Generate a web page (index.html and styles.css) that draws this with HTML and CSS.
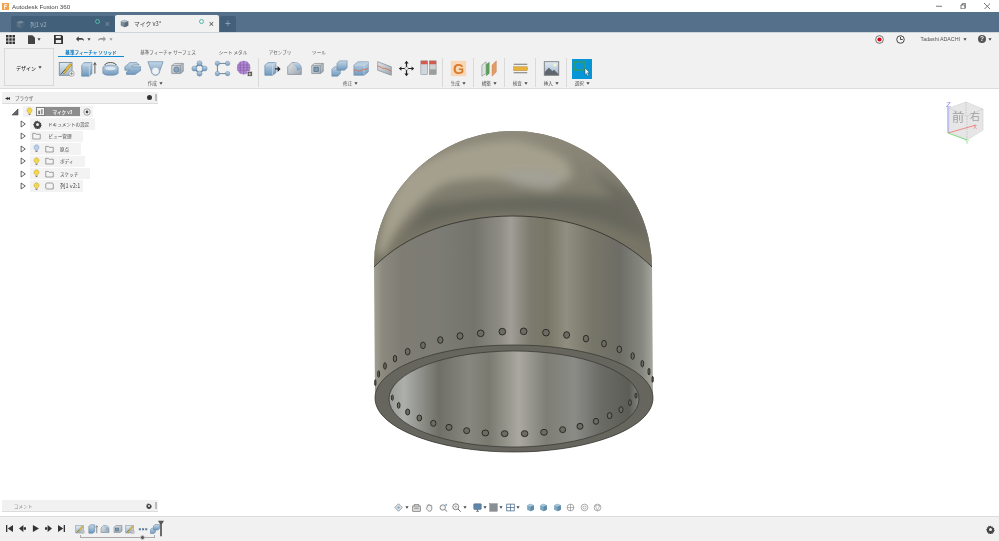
FILE: index.html
```html
<!DOCTYPE html>
<html lang="ja">
<head>
<meta charset="utf-8">
<title>Autodesk Fusion 360</title>
<link rel="stylesheet" href="styles.css">
</head>
<body>
<svg class="defs" aria-hidden="true">
  <defs>
    <linearGradient id="blue" x1="0" y1="0" x2="0" y2="1"><stop offset="0" stop-color="#c4d6e6"/><stop offset="1" stop-color="#6f98bd"/></linearGradient>
    <linearGradient id="grey" x1="0" y1="0" x2="1" y2="1"><stop offset="0" stop-color="#e4e6e8"/><stop offset="1" stop-color="#9aa5af"/></linearGradient>
    <linearGradient id="sky" x1="0" y1="0" x2="0" y2="1"><stop offset="0" stop-color="#dfeaf3"/><stop offset="1" stop-color="#9fb8cc"/></linearGradient>
    <linearGradient id="domebase" x1="0" y1="131" x2="0" y2="230" gradientUnits="userSpaceOnUse"><stop offset="0" stop-color="#8d8a7b"/><stop offset="1" stop-color="#787566"/></linearGradient>
    <linearGradient id="body" x1="374" y1="0" x2="653" y2="0" gradientUnits="userSpaceOnUse">
      <stop offset="0" stop-color="#a3a094"/><stop offset=".03" stop-color="#8c8a7f"/><stop offset=".1" stop-color="#7f7d73"/><stop offset=".25" stop-color="#7b7b75"/><stop offset=".36" stop-color="#74746d"/><stop offset=".45" stop-color="#8d8c84"/><stop offset=".49" stop-color="#a09e96"/><stop offset=".56" stop-color="#7d7b6f"/><stop offset=".62" stop-color="#787666"/><stop offset=".69" stop-color="#908e80"/><stop offset=".78" stop-color="#777669"/><stop offset=".88" stop-color="#6d6d66"/><stop offset=".96" stop-color="#868880"/><stop offset="1" stop-color="#a6a8a0"/>
    </linearGradient>
    <linearGradient id="inner" x1="389" y1="0" x2="639" y2="0" gradientUnits="userSpaceOnUse">
      <stop offset="0" stop-color="#9a9c98"/><stop offset=".06" stop-color="#adafab"/><stop offset=".2" stop-color="#6f6f66"/><stop offset=".32" stop-color="#87877f"/><stop offset=".4" stop-color="#7a7a70"/><stop offset=".52" stop-color="#aaa8a0"/><stop offset=".63" stop-color="#7e7e76"/><stop offset=".74" stop-color="#8b8b87"/><stop offset=".85" stop-color="#6b6b66"/><stop offset=".96" stop-color="#5d5d57"/><stop offset="1" stop-color="#85857f"/>
    </linearGradient>
    <filter id="soft" x="-20%" y="-20%" width="140%" height="140%"><feGaussianBlur stdDeviation="5"/></filter>
    <symbol id="bulb" viewBox="0 0 10 12"><path d="M5 .8a3.600 3.600 0 0 0-2.200 6.400c.6.600.7 1.100.8 1.800h2.800c.1-.7.2-1.200.8-1.800A3.600 3.600 0 0 0 5 .8z" fill="#f6d84a" stroke="#b59a30" stroke-width=".7"/><path d="M3.800 9.600h2.400v1.400H3.800z" fill="#777"/></symbol>
    <symbol id="bulb-off" viewBox="0 0 10 12"><path d="M5 .8a3.600 3.600 0 0 0-2.200 6.400c.6.600.7 1.100.8 1.800h2.800c.1-.7.2-1.200.8-1.800A3.600 3.600 0 0 0 5 .8z" fill="#b7d0ee" stroke="#6f8fb5" stroke-width=".7"/><path d="M3.800 9.600h2.400v1.400H3.800z" fill="#777"/></symbol>
    <symbol id="folder" viewBox="0 0 12 10"><path d="M1 1.500h3.500l1 1.200H11V9H1z" fill="#f4f4f4" stroke="#666" stroke-width=".8"/></symbol>
    <symbol id="tri" viewBox="0 0 8 10"><path d="M1.500 1v8L7 5z" fill="#fff" stroke="#333" stroke-width="1"/></symbol>
    <symbol id="caret" viewBox="0 0 5 3"><path d="M.5 0h4L2.500 3z" fill="#444"/></symbol>
    <symbol id="gear" viewBox="0 0 12 12"><path d="M6 .8l1 1.600 1.800-.5.300 1.900 1.900.3-.5 1.800 1.600 1-1.600 1 .5 1.800-1.900.3-.3 1.900-1.800-.5-1 1.600-1-1.600-1.800.5-.3-1.900-1.900-.3.5-1.800L0 6l1.600-1-.5-1.800 1.900-.3.300-1.900 1.800.5z" fill="#444"/><circle cx="6" cy="6" r="2" fill="#eee"/></symbol>
    <symbol id="cube-dk" viewBox="0 0 12 12"><path d="M1 3l5-2 5 2v6l-5 2-5-2z" fill="#7c8a96"/><path d="M1 3l5 2 5-2-5-2z" fill="#b3bec8"/><path d="M6 5v6l5-2V3z" fill="#5c6b78"/></symbol>
    <symbol id="cube-teal" viewBox="0 0 12 12"><path d="M1.500 3l4.500-2 4.500 2v6L6 11 1.500 9z" fill="#7fa8c0"/><path d="M1.500 3L6 5l4.500-2L6 1z" fill="#a9c6d8"/><path d="M6 5v6l4.500-2V3z" fill="#5f8ba6"/></symbol>
    <symbol id="sketch" viewBox="0 0 20 20"><rect x="1.500" y="3" width="15" height="15" fill="url(#sky)" stroke="#7b8793"/><path d="M5 15L14 4l2.500 2L7 16.500z" fill="#e5b93a" stroke="#8a6f1e" stroke-width=".6"/><path d="M3 17l6-6" stroke="#3d5a78"/><circle cx="16" cy="16" r="3.200" fill="#f4f4f4" stroke="#888" stroke-width=".7"/><path d="M16 14v4M14 16h4" stroke="#777" stroke-width=".8"/></symbol>
    <symbol id="mini-extrude" viewBox="0 0 12 12"><path d="M1 3l2-2h5v8l-2 2H1z" fill="url(#blue)" stroke="#5c7f9f" stroke-width=".7"/><path d="M10.500 11V3M9.200 4l1.300-2 1.300 2" stroke="#444" stroke-width=".7" fill="none"/></symbol>
  </defs>
</svg>

<header class="titlebar">
  <svg class="app-logo" viewBox="0 0 8 8"><rect width="8" height="8" fill="#f3a14a"/><path d="M2.500 1.500h3.500v1H3.500v1.200h2v1h-2V7h-1z" fill="#fff"/></svg>
  <span class="app-title">Autodesk Fusion 360</span>
  <div class="winbtns">
    <svg viewBox="0 0 10 10"><path d="M0 5h10" stroke="#333"/></svg>
    <svg viewBox="0 0 10 10"><path d="M1.500 3h6v6h-6zM3.500 3V1h5.500v5.500H7.500" fill="none" stroke="#333"/></svg>
    <svg viewBox="0 0 10 10"><path d="M0 0l10 10M10 0L0 10" stroke="#333"/></svg>
  </div>
</header>

<nav class="tabbar">
  <div class="tab tab-off">
    <svg class="tab-cube"><use href="#cube-dk"/></svg>
    <span class="tab-label">列1 v2</span>
    <span class="tab-ring"></span>
    <span class="tab-x">×</span>
  </div>
  <div class="tab tab-on">
    <svg class="tab-cube"><use href="#cube-dk"/></svg>
    <span class="tab-label">マイク v3*</span>
    <span class="tab-ring"></span>
    <span class="tab-x">×</span>
  </div>
  <div class="tab-plus">+</div>
</nav>

<section class="appbar">
  <svg class="ic-grid" viewBox="0 0 9 9"><path d="M0 0h2.500v2.500H0zM3.250 0h2.500v2.500h-2.500zM6.500 0H9v2.500H6.500zM0 3.250h2.500v2.500H0zM3.250 3.250h2.500v2.500h-2.500zM6.500 3.250H9v2.500H6.500zM0 6.500h2.500V9H0zM3.250 6.500h2.500V9h-2.500zM6.500 6.500H9V9H6.500z" fill="#333"/></svg>
  <svg class="ic-file" viewBox="0 0 8 10"><path d="M0 0h5l3 3v7H0z" fill="#444"/></svg>
  <svg class="caret ic-file-c"><use href="#caret"/></svg>
  <svg class="ic-save" viewBox="0 0 10 10"><path d="M0 0h8.500L10 1.500V10H0z" fill="#333"/><rect x="2" y="1" width="5.500" height="2.500" fill="#eee"/><rect x="2" y="5.500" width="6" height="3.500" fill="#eee"/></svg>
  <svg class="ic-undo" viewBox="0 0 12 8"><path d="M0 4l4-4v2.500h4c2.500 0 4 1.500 4 4.500-1-1.600-2.200-2-4-2H4V8z" fill="#444"/></svg>
  <svg class="caret"><use href="#caret"/></svg>
  <svg class="ic-redo" viewBox="0 0 12 8"><path d="M12 4L8 0v2.500H4C1.500 2.500 0 4 0 7c1-1.600 2.200-2 4-2h4v3z" fill="#9a9a9a"/></svg>
  <svg class="caret dim"><use href="#caret"/></svg>
  <div class="appbar-right">
    <svg class="ic-rec" viewBox="0 0 10 10"><circle cx="5" cy="5" r="4.300" fill="#f3f3f3" stroke="#666"/><circle cx="5" cy="5" r="2.300" fill="#e2001a"/></svg>
    <svg class="ic-clock" viewBox="0 0 10 10"><circle cx="5" cy="5" r="4.200" fill="#f3f3f3" stroke="#333"/><path d="M5 2.200V5h2.500" fill="none" stroke="#333"/></svg>
    <span class="user">Tadashi ADACHI</span>
    <svg class="caret"><use href="#caret"/></svg>
    <span class="help">?</span>
    <svg class="caret"><use href="#caret"/></svg>
  </div>
</section>

<section class="ribbon">
  <button class="design">デザイン<svg class="caret"><use href="#caret"/></svg></button>
  <div class="ribbon-main">
    <div class="ribbon-tabs">
      <span class="rtab rtab-on">基準フィーチャ ソリッド</span>
      <span class="rtab rtab-2">基準フィーチャ サーフェス</span>
      <span class="rtab rtab-3">シート メタル</span>
      <span class="rtab rtab-4">アセンブリ</span>
      <span class="rtab rtab-5">ツール</span>
    </div>
    <div class="ribbon-groups">
      <div class="group">
        <div class="cells">
          <svg class="cell" viewBox="0 0 20 20"><use href="#sketch"/></svg>
          <svg class="cell" viewBox="0 0 20 20"><path d="M2 6l3-3h9v13l-3 3H2z" fill="url(#blue)" stroke="#5c7f9f" stroke-width=".7"/><path d="M2 6h9l3-3M11 6v13" fill="none" stroke="#dbe7f2" stroke-width=".7"/><path d="M17.500 16V4M16 6l1.500-3L19 6" stroke="#444" fill="none"/></svg>
          <svg class="cell" viewBox="0 0 20 20"><path d="M1 9c0-2 4-3 9-3s9 1 9 3v6c0 2-4 3-9 3s-9-1-9-3z" fill="url(#blue)" stroke="#5c7f9f" stroke-width=".7"/><ellipse cx="10" cy="10" rx="6" ry="2" fill="#dbe7f2"/><path d="M3 6c2-4 12-4 14 0" fill="none" stroke="#333"/></svg>
          <svg class="cell" viewBox="0 0 20 20"><path d="M1 8l6-5h8l3 3h-7l-2 2h11v4l-7 5H3v-3l4-2H1z" fill="url(#blue)" stroke="#5c7f9f" stroke-width=".7"/></svg>
          <svg class="cell" viewBox="0 0 20 20"><path d="M1 2h18l-4 11a5 5 0 0 1-10 0z" fill="url(#blue)" stroke="#5c7f9f" stroke-width=".7"/><circle cx="10" cy="13" r="4.500" fill="#f0f3f6" stroke="#8aa3ba" stroke-width=".6"/></svg>
          <svg class="cell small" viewBox="0 0 20 20"><path d="M2 6l4-3h12v11l-4 3H2z" fill="url(#grey)" stroke="#6e7b87" stroke-width=".8"/><path d="M2 6h12v11M14 6l4-3" fill="none" stroke="#6e7b87" stroke-width=".7"/><circle cx="8.500" cy="11.500" r="3.600" fill="#8ba5bd" stroke="#4f6a83" stroke-width=".8"/></svg>
          <svg class="cell" viewBox="0 0 20 20"><path d="M10 4L4 10l6 6 6-6z" fill="none" stroke="#5e82a4" stroke-width="1.600"/><circle cx="10" cy="4" r="3" fill="url(#blue)" stroke="#5c7f9f" stroke-width=".5"/><circle cx="4" cy="10" r="3" fill="url(#blue)" stroke="#5c7f9f" stroke-width=".5"/><circle cx="16" cy="10" r="3" fill="url(#blue)" stroke="#5c7f9f" stroke-width=".5"/><circle cx="10" cy="16" r="3" fill="url(#blue)" stroke="#5c7f9f" stroke-width=".5"/></svg>
          <svg class="cell" viewBox="0 0 20 20"><path d="M4 4h12M4 4v12M4 16h12" stroke="#5b6f83" fill="none"/><rect x="1.500" y="1.500" width="5" height="5" rx="2" fill="url(#blue)" stroke="#5c7f9f" stroke-width=".5"/><rect x="13.500" y="1.500" width="5" height="5" rx="2" fill="url(#blue)" stroke="#5c7f9f" stroke-width=".5"/><rect x="1.500" y="13.500" width="5" height="5" rx="2" fill="url(#blue)" stroke="#5c7f9f" stroke-width=".5"/><rect x="13.500" y="13.500" width="5" height="5" rx="2" fill="url(#blue)" stroke="#5c7f9f" stroke-width=".5"/></svg>
          <svg class="cell" viewBox="0 0 20 20"><circle cx="9" cy="9" r="8" fill="#b08ad0"/><path d="M1.500 6h15M1.500 9h15M1.500 12h15M5 2v14M9 1v16M13 2v14" stroke="#7a50a0" stroke-width=".6"/><rect x="13.500" y="13.500" width="5.500" height="5.500" fill="#555" stroke="#eee" stroke-width=".5"/><path d="M16.200 15v3M14.800 16.500h3" stroke="#fff" stroke-width=".7"/></svg>
        </div>
        <div class="glabel">作成<svg class="caret"><use href="#caret"/></svg></div>
      </div>
      <div class="group">
        <div class="cells">
          <svg class="cell" viewBox="0 0 20 20"><path d="M1 6l4-3h9v12l-4 3H1z" fill="url(#blue)" stroke="#5c7f9f" stroke-width=".7"/><path d="M10 6H1M10 6v12M10 6l4-3" stroke="#dbe7f2" stroke-width=".6" fill="none"/><path d="M13 9.800h3V7l3.500 3.500-3.500 3.500v-2.800h-3z" fill="#222"/></svg>
          <svg class="cell" viewBox="0 0 20 20"><path d="M2 8l5-5h4c4 0 7 3 7 7v7H2z" fill="url(#grey)" stroke="#6e7b87" stroke-width=".7"/><path d="M11 3c4 0 7 3 7 7l-5 3c0-4-2-7-5-7z" fill="url(#blue)"/></svg>
          <svg class="cell small" viewBox="0 0 20 20"><path d="M2 6l4-3h12v11l-4 3H2z" fill="url(#grey)" stroke="#6e7b87" stroke-width=".8"/><path d="M14 6l4-3M14 6v11M2 6h12" stroke="#6e7b87" stroke-width=".7" fill="none"/><rect x="5" y="8" width="6" height="6" fill="#7e9cb8" stroke="#3f5870" stroke-width=".8"/></svg>
          <svg class="cell" viewBox="0 0 20 20"><path d="M1 11l3-3h7v8l-3 3H1z" fill="url(#blue)" stroke="#5c7f9f" stroke-width=".6"/><path d="M7 4l3-3h9v8l-3 3H7z" fill="url(#blue)" stroke="#5c7f9f" stroke-width=".6"/></svg>
          <svg class="cell" viewBox="0 0 20 20"><path d="M1 6l5-4h12v12l-5 4H1z" fill="url(#blue)" stroke="#5c7f9f" stroke-width=".6"/><path d="M1 6h12l5-4M13 6v12" stroke="#dbe7f2" stroke-width=".6" fill="none"/><path d="M1 12c3-2 4 2 7 1s4-3 6-2 3-1 4-2" stroke="#d9694a" fill="none"/></svg>
          <svg class="cell" viewBox="0 0 20 20"><path d="M2 2l16 6v10L2 12z" fill="url(#grey)" stroke="#6e7b87" stroke-width=".7"/><path d="M2 7c4 1 5 3 8 3s5 2 8 3" stroke="#d9694a" fill="none"/></svg>
          <svg class="cell" viewBox="0 0 20 20"><path d="M10 1l2.500 3h-1.800v5.300H16V7.500l3 2.500-3 2.500v-1.800h-5.300V16h1.800L10 19l-2.500-3h1.800v-5.300H4v1.800L1 10l3-2.500v1.800h5.300V4H7.500z" fill="#222"/><circle cx="10" cy="10" r="2" fill="#eee" stroke="#555" stroke-width=".5"/></svg>
          <svg class="cell" viewBox="0 0 20 20"><rect x="1" y="1" width="8" height="16" fill="#cfd6dc" stroke="#7d8790" stroke-width=".6"/><rect x="11" y="1" width="8" height="16" fill="#cfd0cf" stroke="#7d8790" stroke-width=".6"/><rect x="1" y="1" width="8" height="4" fill="#d35a4c"/><rect x="11" y="1" width="8" height="4" fill="#d35a4c"/><rect x="11" y="11" width="8" height="6" fill="#9b9f9c"/></svg>
        </div>
        <div class="glabel">修正<svg class="caret"><use href="#caret"/></svg></div>
      </div>
      <div class="group single">
        <div class="cells"><svg class="cell" viewBox="0 0 20 20"><rect x="1" y="1" width="18" height="18" fill="#f9d7b5"/><text x="10" y="16" class="g-letter">G</text></svg></div>
        <div class="glabel">生成<svg class="caret"><use href="#caret"/></svg></div>
      </div>
      <div class="group single">
        <div class="cells"><svg class="cell" viewBox="0 0 20 20"><path d="M1 6l5-4v14l-5 3z" fill="#dfe2e4" stroke="#777" stroke-width=".6"/><path d="M6 5l4-3v14l-4 3z" fill="#5e9c5a"/><path d="M13 6l5-5v13l-5 5z" fill="#e69b63" stroke="#b87a4a" stroke-width=".5"/></svg></div>
        <div class="glabel">構築<svg class="caret"><use href="#caret"/></svg></div>
      </div>
      <div class="group single">
        <div class="cells"><svg class="cell" viewBox="0 0 20 20"><path d="M2 5h16M2 15h16" stroke="#777" stroke-width="1.200"/><rect x="2" y="8" width="16" height="4.500" fill="#e9b23c" stroke="#a97f20" stroke-width=".5"/></svg></div>
        <div class="glabel">検査<svg class="caret"><use href="#caret"/></svg></div>
      </div>
      <div class="group single">
        <div class="cells"><svg class="cell" viewBox="0 0 20 20"><rect x="1.500" y="2" width="17" height="16" fill="url(#sky)" stroke="#777"/><path d="M2 17.500V14l5-5 4 4 2-1.500 5 5v1z" fill="#5f666d"/><circle cx="14" cy="6" r="1.800" fill="#f7f3d0"/></svg></div>
        <div class="glabel">挿入<svg class="caret"><use href="#caret"/></svg></div>
      </div>
      <div class="group single last">
        <div class="cells"><svg class="cell big" viewBox="0 0 20 20"><rect width="20" height="20" fill="#0696d7"/><rect x="2" y="3" width="11" height="8" fill="none" stroke="#3f9b4e" stroke-width="1.200"/><path d="M13 9l4.500 4.500-2 .3 1.200 2.700-1.200.5-1.200-2.600-1.300 1.300z" fill="#f2f2f2" stroke="#333" stroke-width=".4"/></svg></div>
        <div class="glabel">選択<svg class="caret"><use href="#caret"/></svg></div>
      </div>
    </div>
  </div>
</section>

<main class="canvas">
  <svg class="model" viewBox="0 89 999 427" preserveAspectRatio="none">
    <defs>
      <clipPath id="domeclip"><path d="M374 267C374 190 440 131 513 131S652 190 652 267C620 235 570 216 513 216S405 235 374 267z"/></clipPath>
    </defs>
    <path d="M374 267C374 190 440 131 513 131S652 190 652 267L653 398C653 428 590 452 514 452S375 428 375 398z" fill="url(#body)"/>
    <g clip-path="url(#domeclip)">
      <rect x="370" y="125" width="290" height="150" fill="url(#domebase)"/>
      <g filter="url(#soft)">
        <path d="M427 207C470 196 560 192 627 200L645 240C600 218 560 212 513 212C470 212 430 222 405 235z" fill="#68675d"/>
        <path d="M590 170L640 200L652 250L620 205z" fill="#6c6b61"/>
        <path d="M376 255C382 215 392 195 403 177C425 158 460 143 510 140C530 141 550 150 567 160L573 177C560 187 530 187 520 185C505 178 480 175 447 183C425 192 400 220 384 255z" fill="#a5a08e"/>
        <path d="M505 172C525 170 550 172 565 178L555 188C540 190 520 186 505 180z" fill="#a3a197"/>
      </g>
    </g>
    <path d="M374 267C405 235 455 216 513 216S620 235 652 267" fill="none" stroke="#2d2d2a" stroke-width=".8"/>
    <path d="M375 398C375 368 437 345 514 345S653 368 653 398 590 452 514 452 375 428 375 398z" fill="#66665f" stroke="#33332f" stroke-width=".7"/>
    <ellipse cx="514" cy="399" rx="125" ry="48" fill="url(#inner)" stroke="#33332f" stroke-width=".7"/>
    <g transform="translate(360 230) scale(.3333)" class="holes">
      <ellipse cx="46" cy="458" rx="2" ry="9"/><ellipse cx="56" cy="432" rx="3" ry="10"/><ellipse cx="75" cy="408" rx="4" ry="10"/><ellipse cx="105" cy="386" rx="5" ry="10"/><ellipse cx="143" cy="365" rx="7" ry="10"/><ellipse cx="189" cy="346" rx="7" ry="10"/><ellipse cx="241" cy="330" rx="8" ry="10"/><ellipse cx="300" cy="318" rx="9" ry="10"/><ellipse cx="362" cy="310" rx="10" ry="10"/><ellipse cx="427" cy="305" rx="10" ry="10"/><ellipse cx="491" cy="304" rx="10" ry="10"/><ellipse cx="558" cy="308" rx="10" ry="10"/><ellipse cx="620" cy="315" rx="9" ry="10"/><ellipse cx="678" cy="326" rx="8" ry="10"/><ellipse cx="732" cy="341" rx="7" ry="10"/><ellipse cx="778" cy="358" rx="7" ry="10"/><ellipse cx="818" cy="378" rx="5" ry="10"/><ellipse cx="847" cy="401" rx="4" ry="10"/><ellipse cx="867" cy="425" rx="3" ry="10"/><ellipse cx="878" cy="448" rx="2" ry="9"/>
      <ellipse cx="97" cy="503" rx="3" ry="8"/><ellipse cx="116" cy="526" rx="4" ry="9"/><ellipse cx="143" cy="546" rx="6" ry="9"/><ellipse cx="178" cy="564" rx="7" ry="9"/><ellipse cx="220" cy="580" rx="8" ry="9"/><ellipse cx="267" cy="592" rx="9" ry="9"/><ellipse cx="320" cy="602" rx="9" ry="9"/><ellipse cx="376" cy="609" rx="10" ry="9"/><ellipse cx="434" cy="611" rx="10" ry="9"/><ellipse cx="494" cy="611" rx="10" ry="9"/><ellipse cx="552" cy="607" rx="10" ry="9"/><ellipse cx="608" cy="599" rx="9" ry="9"/><ellipse cx="660" cy="589" rx="9" ry="9"/><ellipse cx="708" cy="574" rx="8" ry="9"/><ellipse cx="749" cy="557" rx="7" ry="9"/><ellipse cx="783" cy="539" rx="6" ry="9"/><ellipse cx="810" cy="518" rx="4" ry="9"/><ellipse cx="828" cy="497" rx="3" ry="8"/>
    </g>
  </svg>

  <svg class="viewcube" viewBox="0 0 40 44">
    <path d="M4 8L21 2l17 7v21L22 40 4 32z" fill="#e6e6e6" stroke="#d2d2d2" stroke-width=".6"/>
    <path d="M21 2v12M4 8l18 8 16-7M22 16v24" fill="none" stroke="#b5b5b5" stroke-width=".6" stroke-dasharray="1.500 1"/>
    <text x="7" y="22" class="cube-txt">前</text>
    <text x="25" y="19.500" class="cube-txt side">右</text>
    <path d="M3 33V7" stroke="#8d8dee"/><path d="M3 33L31 25" stroke="#e88"/><path d="M3 33L22 40" stroke="#7fdc7f"/>
    <text x="1" y="7" class="axis-z">Z</text><text x="28" y="29" class="axis-x">X</text><text x="20" y="44" class="axis-y">Y</text>
  </svg>

  <aside class="browser">
    <header class="panel-head">
      <span class="panel-arrow">◂◂</span><span class="panel-title">ブラウザ</span>
      <span class="panel-dot"></span><span class="panel-grip"></span>
    </header>
    <ul class="tree">
      <li class="node root">
        <svg class="tw-open" viewBox="0 0 8 8"><path d="M7 1v6H1z" fill="#666" stroke="#444" stroke-width=".6"/></svg>
        <span class="chip">
          <svg class="bulb"><use href="#bulb"/></svg>
          <span class="doc">
            <svg class="docic" viewBox="0 0 10 10"><rect x=".5" y=".5" width="9" height="9" fill="#f5f5f5" stroke="#777"/><rect x="2.500" y="4" width="2" height="4" fill="#777"/><rect x="5.500" y="2.500" width="2" height="5.500" fill="#999"/></svg>
            <span class="doc-name">マイク v3</span>
          </span>
          <svg class="radio" viewBox="0 0 10 10"><circle cx="5" cy="5" r="4" fill="#fff" stroke="#666" stroke-width=".8"/><circle cx="5" cy="5" r="1.800" fill="#444"/></svg>
        </span>
      </li>
      <li class="node"><svg class="tw"><use href="#tri"/></svg><span class="chip"><svg class="ic-gear"><use href="#gear"/></svg><span class="lbl wide">ドキュメントの設定</span></span></li>
      <li class="node"><svg class="tw"><use href="#tri"/></svg><span class="chip view"><svg class="folder"><use href="#folder"/></svg><span class="lbl">ビュー管理</span></span></li>
      <li class="node"><svg class="tw"><use href="#tri"/></svg><span class="chip"><svg class="bulb"><use href="#bulb-off"/></svg><svg class="folder"><use href="#folder"/></svg><span class="lbl">原点</span></span></li>
      <li class="node"><svg class="tw"><use href="#tri"/></svg><span class="chip"><svg class="bulb"><use href="#bulb"/></svg><svg class="folder"><use href="#folder"/></svg><span class="lbl">ボディ</span></span></li>
      <li class="node"><svg class="tw"><use href="#tri"/></svg><span class="chip"><svg class="bulb"><use href="#bulb"/></svg><svg class="folder"><use href="#folder"/></svg><span class="lbl">スケッチ</span></span></li>
      <li class="node"><svg class="tw"><use href="#tri"/></svg><span class="chip"><svg class="bulb"><use href="#bulb"/></svg><svg class="folder" viewBox="0 0 12 10"><path d="M2.500 1h7l1.500 1v7H2.500L1 8V2z" fill="#f4f4f4" stroke="#666" stroke-width=".8"/></svg><span class="lbl tight">列1 v2:1</span></span></li>
    </ul>
  </aside>

  <aside class="comments">
    <span class="panel-title comment-title">コメント</span>
    <svg class="panel-gear"><use href="#gear"/></svg><span class="panel-grip"></span>
  </aside>

  <div class="navbar">
    <svg viewBox="0 0 12 12" class="nv"><path d="M6 1l5 5-5 5-5-5z" fill="#dfe8f0" stroke="#666" stroke-width=".8"/><circle cx="6" cy="6" r="1.600" fill="#8aa6bf"/></svg><svg class="caret nc-a"><use href="#caret"/></svg>
    <svg viewBox="0 0 12 12" class="nv gap4"><rect x="1" y="4" width="10" height="7" fill="#ddd" stroke="#555" stroke-width=".8"/><path d="M3 4V2h6v2M3 7h6" stroke="#555" fill="none" stroke-width=".8"/></svg>
    <svg viewBox="0 0 12 12" class="nv gap5"><path d="M3 6V3.500a.8.800 0 0 1 1.500 0V2.500a.8.800 0 0 1 1.500 0v.5a.8.800 0 0 1 1.500 0v1a.8.800 0 0 1 1.500 0V8c0 2-1.500 3-3 3S3.500 10 2 7.500C1.500 6.500 2.500 6 3 6z" fill="#f4f4f4" stroke="#555" stroke-width=".8"/></svg>
    <svg viewBox="0 0 12 12" class="nv gap4"><circle cx="5" cy="6" r="3.600" fill="#f4f4f4" stroke="#555" stroke-width=".9"/><path d="M8 9l3 2.500" stroke="#555"/><path d="M9.500 1v3M8 2.500h3" stroke="#5a86aa" stroke-width=".8"/></svg>
    <svg viewBox="0 0 12 12" class="nv"><circle cx="5" cy="5" r="4" fill="#f4f4f4" stroke="#555" stroke-width=".9"/><path d="M8 8l3.500 3.500" stroke="#555" stroke-width="1.200"/><path d="M3 5h4M5 3v4" stroke="#7a9ab5" stroke-width=".7"/></svg><svg class="caret nc-b"><use href="#caret"/></svg>
    <svg viewBox="0 0 12 12" class="nv"><rect x="1" y="1" width="10" height="7.500" rx="1" fill="#5f87ad" stroke="#4b5f72" stroke-width=".7"/><path d="M4 11h4M6 8.500V11" stroke="#555"/></svg><svg class="caret nc-c"><use href="#caret"/></svg>
    <svg viewBox="0 0 12 12" class="nv"><rect x="1" y="1" width="10" height="10" fill="#8a8f94" stroke="#666" stroke-width=".5"/></svg><svg class="caret nc-c"><use href="#caret"/></svg>
    <svg viewBox="0 0 12 12" class="nv"><rect x="1" y="1.500" width="10" height="9" fill="#fff" stroke="#45688c"/><path d="M6 1.500v9M1 6h10" stroke="#45688c"/></svg><svg class="caret nc-d"><use href="#caret"/></svg>
    <svg class="nv v"><use href="#cube-teal"/></svg>
    <svg class="nv v"><use href="#cube-teal"/></svg>
    <svg class="nv v"><use href="#cube-teal"/></svg>
    <svg viewBox="0 0 12 12" class="nv v"><circle cx="6" cy="6" r="4.500" fill="none" stroke="#777" stroke-width=".8"/><path d="M6 1.500v9M1.500 6h9" stroke="#777" stroke-width=".7"/></svg>
    <svg viewBox="0 0 12 12" class="nv v"><circle cx="6" cy="6" r="4.500" fill="none" stroke="#777" stroke-width=".8"/><circle cx="6" cy="6" r="2" fill="none" stroke="#777" stroke-width=".7"/></svg>
    <svg viewBox="0 0 12 12" class="nv v"><circle cx="6" cy="6" r="4.500" fill="none" stroke="#777" stroke-width=".8"/><path d="M3 3.500h6L6 10z" fill="none" stroke="#777" stroke-width=".6"/></svg>
  </div>
</main>

<footer class="timeline">
  <div class="player">
    <svg viewBox="0 0 8 8" class="pl"><path d="M0 0h1.500v8H0zM8 0v8L2 4z" fill="#333"/></svg>
    <svg viewBox="0 0 8 8" class="pl"><path d="M5 0v8L0 4zM5.500 2.500H8v3H5.500z" fill="#333"/></svg>
    <svg viewBox="0 0 8 8" class="pl"><path d="M1 0v8l7-4z" fill="#333"/></svg>
    <svg viewBox="0 0 8 8" class="pl"><path d="M3 0v8l5-4zM0 2.500h2.500v3H0z" fill="#333"/></svg>
    <svg viewBox="0 0 8 8" class="pl"><path d="M0 0v8l6-4zM6.500 0H8v8H6.500z" fill="#333"/></svg>
  </div>
  <div class="steps">
    <div class="step-row">
      <svg class="st" viewBox="0 0 20 20"><use href="#sketch"/></svg>
      <svg class="st" viewBox="0 0 12 12"><use href="#mini-extrude"/></svg>
      <svg class="st" viewBox="0 0 20 20"><path d="M2 8l5-5h4c4 0 7 3 7 7v7H2z" fill="url(#grey)" stroke="#5c7f9f"/><path d="M11 3c4 0 7 3 7 7l-5 3c0-4-2-7-5-7z" fill="url(#blue)"/></svg>
      <svg class="st" viewBox="0 0 20 20"><path d="M2 6l4-3h12v11l-4 3H2z" fill="url(#grey)" stroke="#6e7b87"/><rect x="5" y="8" width="6" height="6" fill="#7e9cb8" stroke="#3f5870"/></svg>
      <svg class="st" viewBox="0 0 20 20"><use href="#sketch"/></svg>
      <svg class="st" viewBox="0 0 12 12"><path d="M1 5h2.500v2.500H1zM4.800 5h2.500v2.500H4.800zM8.600 5h2.500v2.500H8.600z" fill="#5c7f9f"/></svg>
      <svg class="st" viewBox="0 0 20 20"><path d="M1 11l3-3h7v8l-3 3H1z" fill="url(#blue)" stroke="#5c7f9f"/><path d="M7 4l3-3h9v8l-3 3H7z" fill="url(#blue)" stroke="#5c7f9f"/></svg>
      <svg class="marker" viewBox="0 0 7 18"><path d="M0 0h7L4.500 4v14h-2V4z" fill="#555"/></svg>
    </div>
    <div class="slider"><span class="thumb"></span></div>
  </div>
  <svg class="tl-gear"><use href="#gear"/></svg>
</footer>
</body>
</html>
```

FILE: styles.css
```css
* { box-sizing: border-box; }
html, body { margin: 0; padding: 0; }
body {
  width: 999px;
  height: 541px;
  overflow: hidden;
  display: flex;
  flex-direction: column;
  background: #fff;
  color: #3c3c3c;
  font-family: "Noto Sans CJK JP", "Liberation Sans", sans-serif;
  font-size: 4.6px;
  filter: blur(.3px);
}
ul { list-style: none; margin: 0; padding: 0; }
svg { display: block; flex: none; }
.defs { position: absolute; width: 0; height: 0; }
.caret { width: 4px; height: 3px; }
.caret.dim { opacity: .5; }

.titlebar { height: 12px; display: flex; align-items: center; padding-left: 2px; background: #fff; flex: none; }
.app-logo { width: 7px; height: 7px; }
.app-title { margin-left: 3px; font: 6.200px "Liberation Sans", sans-serif; color: #444; }
.winbtns { margin-left: auto; display: flex; gap: 17.500px; padding-right: 9px; }
.winbtns svg { width: 6.500px; height: 6.500px; }

.tabbar { height: 21px; flex: none; background: #54708a; border-bottom: 1px solid #cfd6dc; display: flex; align-items: flex-end; padding-left: 11px; }
.tab { width: 104px; height: 16px; display: flex; align-items: center; padding-left: 5px; border-radius: 2px 2px 0 0; font: 5.800px "Noto Sans CJK JP", sans-serif; }
.tab-off { background: #42607a; color: #9fb2c3; }
.tab-on { background: #f1f1f1; color: #444; height: 17px; }
.tab-cube { width: 9px; height: 9px; }
.tab-off .tab-cube { opacity: .45; }
.tab-label { margin-left: 5px; }
.tab-ring { width: 5px; height: 5px; border: 1px solid #4fb7a8; border-radius: 50%; margin-left: auto; margin-bottom: 5px; }
.tab-x { margin: 0 5px 0 5px; font: 9px "Liberation Sans", sans-serif; }
.tab-off .tab-x { color: #7b92a6; }
.tab-plus { width: 16px; height: 16px; margin-left: 1px; background: #42607a; color: #8ea4b8; border-radius: 2px 2px 0 0; text-align: center; font: 10px/16px "Liberation Sans", sans-serif; }

.appbar { height: 15px; flex: none; background: #f1f1f1; display: flex; align-items: center; padding: 0 0 3px 6px; }
.ic-grid { width: 9px; height: 9px; }
.ic-file { width: 7px; height: 9px; margin-left: 13px; }
.ic-file-c { margin-left: 2px; }
.ic-save { width: 9px; height: 9px; margin-left: 13px; }
.ic-undo { width: 8px; height: 6px; margin-left: 13px; margin-right: 3px; }
.ic-redo { width: 8px; height: 6px; margin-left: 7px; margin-right: 3px; }
.appbar-right { margin-left: auto; display: flex; align-items: center; padding-right: 7px; }
.ic-rec, .ic-clock { width: 9px; height: 9px; }
.ic-clock { margin-left: 12px; }
.user { margin-left: 15.500px; margin-right: 3px; font: 5.300px "Liberation Sans", sans-serif; color: #555; }
.help { margin-left: 11px; margin-right: 2px; width: 8px; height: 8px; border-radius: 50%; background: #555; color: #eee; text-align: center; font: bold 6.500px/8px "Liberation Sans", sans-serif; }

.ribbon { height: 41px; flex: none; background: #f1f1f1; border-bottom: 1px solid #dcdcdc; display: flex; padding: 0 0 0 4px; }
.design { width: 50px; height: 38px; margin: 0 1px 2px 0; padding: 0; background: #f1f1f1; border: 1px solid #d9d9d9; font: 500 5px "Noto Sans CJK JP", sans-serif; color: #333; display: flex; align-items: center; justify-content: center; gap: 2px; }
.ribbon-main { display: flex; flex-direction: column; }
.ribbon-tabs { height: 10px; display: flex; line-height: 8px; white-space: nowrap; }
.rtab { color: #555; }
.rtab-on { margin-left: 3px; width: 66px; text-align: center; color: #0a78c2; font-weight: 700; border-bottom: 1px solid #0a8ad8; height: 9px; }
.rtab-2 { margin-left: 16px; width: 56px; text-align: center; }
.rtab-3 { margin-left: 22px; width: 30px; text-align: center; }
.rtab-4 { margin-left: 20px; width: 24px; text-align: center; }
.rtab-5 { margin-left: 19px; width: 16px; text-align: center; }
.ribbon-groups { display: flex; }
.group { border-right: 1px solid #d9d9d9; padding: 0 2px 0 3px; height: 29px; display: flex; flex-direction: column; }
.group:first-child { padding-left: 0; }
.group.last { border-right: 0; }
.cells { display: flex; height: 20px; padding-top: 2px; }
.cell { width: 17px; height: 17px; margin: 0 2.650px; }
.cell.small { transform: scale(.85); }
.group.single .cell { margin: 0 4px; }
.group.single .cell.big { width: 20px; height: 20px; margin: -1px 2.500px 0; }
.glabel { margin-top: 1px; display: flex; justify-content: center; align-items: center; gap: 2px; color: #555; line-height: 8px; }
.g-letter { font: bold 17px "Liberation Sans", sans-serif; fill: #d5792b; text-anchor: middle; }

.canvas { flex: 1; position: relative; background: #fff; overflow: hidden; }
.model { position: absolute; inset: 0; width: 100%; height: 100%; }
.holes ellipse { fill: #6c6c64; stroke: #26261f; stroke-width: 2.800; }
.viewcube { position: absolute; left: 945px; top: 11px; width: 40px; height: 44px; }
.cube-txt { font: 12px "Noto Sans CJK JP", sans-serif; fill: #a0a0a0; }
.cube-txt.side { font-size: 10px; }
.axis-z { font: 8px "Liberation Sans", sans-serif; fill: #8d8dee; }
.axis-x { font: 6px "Liberation Sans", sans-serif; fill: #e88; }
.axis-y { font: 6px "Liberation Sans", sans-serif; fill: #7fdc7f; }

.browser { position: absolute; left: 2px; top: 3px; width: 156px; }
.panel-head { height: 12px; background: #f1f1f1; border-bottom: 1px solid #dcdcdc; display: flex; align-items: center; padding-left: 3px; }
.panel-arrow { font: 6px "DejaVu Sans", sans-serif; color: #333; letter-spacing: -1px; width: 7px; }
.panel-title { margin-left: 3px; color: #555; }
.panel-dot { width: 5px; height: 5px; background: #333; border-radius: 50%; margin-left: auto; }
.panel-gear { width: 6px; height: 6px; margin-left: auto; }
.panel-grip { width: 2px; height: 7px; margin: 0 1px 0 3px; border: 1px solid #bbb; border-width: 0 1px; }
.tree { padding-top: 1.500px; }
.node { height: 12.400px; display: flex; align-items: center; padding-left: 18px; }
.node.root { padding-left: 9px; }
.tw-open { width: 8px; height: 8px; margin-right: 4px; flex: none; }
.tw { width: 6px; height: 8px; margin-right: 4px; }
.chip { height: 11.500px; background: #f3f3f3; display: flex; align-items: center; padding: 0 2.500px; gap: 5px; }
.root .chip { gap: 3px; }
.bulb { width: 7px; height: 9px; }
.folder { width: 9px; height: 8px; }
.chip.view { padding-left: 2px; gap: 6px; }
.ic-gear { width: 9px; height: 9px; }
.lbl { margin-left: 1.500px; margin-right: 9px; color: #444; white-space: nowrap; }
.lbl.wide { margin-right: 3px; }
.lbl.tight { margin-right: 0; font-size: 5.500px; }
.doc { height: 9px; width: 44px; display: flex; align-items: center; background: #8d8d8d; }
.docic { width: 9px; height: 9px; }
.doc-name { margin-left: 8px; color: #fff; font-weight: 500; white-space: nowrap; }
.radio { width: 8px; height: 8px; }

.comments { position: absolute; left: 2px; top: 411px; width: 156px; height: 12px; background: #f1f1f1; border-bottom: 1px solid #dcdcdc; display: flex; align-items: center; padding-left: 9px; }
.comment-title { color: #888; }

.navbar { position: absolute; left: 393.500px; top: 412px; height: 12px; display: flex; align-items: center; }
.nv { width: 9px; height: 9px; }
.nc-a { margin: 0 2.500px 0 2.500px; }
.nc-b { margin: 0 5.500px 0 2.500px; }
.nc-c { margin: 0 2.500px 0 1px; }
.nc-d { margin: 0 6.500px 0 1px; }
.gap4 { margin-right: 4px; }
.gap5 { margin-right: 5px; }
.v { margin-right: 4.400px; }

.timeline { height: 25px; flex: none; background: #f1f1f1; border-top: 1px solid #dcdcdc; display: flex; position: relative; }
.player { display: flex; gap: 6px; padding: 8px 0 0 6px; }
.pl { width: 7px; height: 7px; }
.steps { margin-left: 10px; display: flex; flex-direction: column; }
.step-row { display: flex; gap: 2.500px; padding-top: 7px; align-items: flex-start; height: 18px; }
.st { width: 10px; height: 10px; }
.marker { width: 6px; height: 17px; margin-left: -4.500px; margin-top: -4px; }
.slider { width: 75px; height: 3px; margin-left: 5px; border: 1px solid #aaa; border-top: 0; position: relative; }
.thumb { position: absolute; left: 59px; top: 0; width: 5px; height: 5px; border-radius: 50%; background: #555; border: 1px solid #ccc; }
.tl-gear { position: absolute; right: 4px; top: 8px; width: 9px; height: 9px; }
```
